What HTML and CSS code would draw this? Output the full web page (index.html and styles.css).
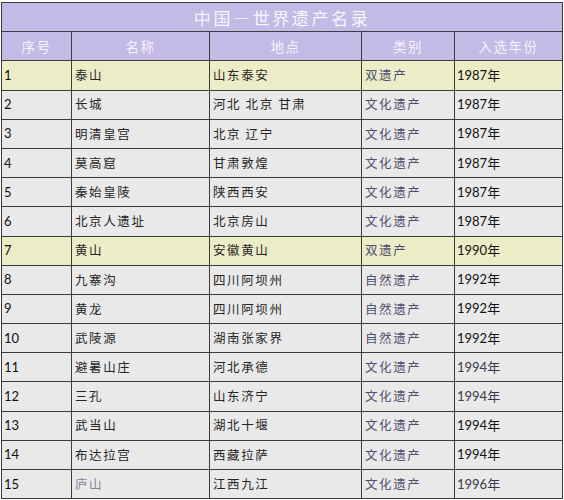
FILE: index.html
```html
<!DOCTYPE html>
<html lang="zh">
<head>
<meta charset="utf-8">
<link rel="stylesheet" href="styles.css">
</head>
<body>
<table class="heritage">
  <colgroup>
    <col class="c-no"><col class="c-name"><col class="c-place"><col class="c-type"><col class="c-year">
  </colgroup>
  <thead>
    <tr class="title-row"><th colspan="5">中国—世界遗产名录</th></tr>
    <tr class="head-row"><th>序号</th><th>名称</th><th>地点</th><th>类别</th><th>入选年份</th></tr>
  </thead>
  <tbody>
    <tr class="dual"><td class="num">1</td><td>泰山</td><td>山东泰安</td><td class="type">双遗产</td><td class="year">1987年</td></tr>
    <tr><td class="num">2</td><td>长城</td><td>河北&nbsp;北京&nbsp;甘肃</td><td class="type">文化遗产</td><td class="year">1987年</td></tr>
    <tr><td class="num">3</td><td>明清皇宫</td><td>北京&nbsp;辽宁</td><td class="type">文化遗产</td><td class="year">1987年</td></tr>
    <tr><td class="num">4</td><td>莫高窟</td><td>甘肃敦煌</td><td class="type">文化遗产</td><td class="year">1987年</td></tr>
    <tr><td class="num">5</td><td>秦始皇陵</td><td>陕西西安</td><td class="type">文化遗产</td><td class="year">1987年</td></tr>
    <tr><td class="num">6</td><td>北京人遗址</td><td>北京房山</td><td class="type">文化遗产</td><td class="year">1987年</td></tr>
    <tr class="dual"><td class="num">7</td><td>黄山</td><td>安徽黄山</td><td class="type">双遗产</td><td class="year">1990年</td></tr>
    <tr><td class="num">8</td><td>九寨沟</td><td>四川阿坝州</td><td class="type">自然遗产</td><td class="year">1992年</td></tr>
    <tr><td class="num">9</td><td>黄龙</td><td>四川阿坝州</td><td class="type">自然遗产</td><td class="year">1992年</td></tr>
    <tr><td class="num">10</td><td>武陵源</td><td>湖南张家界</td><td class="type">自然遗产</td><td class="year">1992年</td></tr>
    <tr><td class="num">11</td><td>避暑山庄</td><td>河北承德</td><td class="type">文化遗产</td><td class="year light">1994年</td></tr>
    <tr><td class="num">12</td><td>三孔</td><td>山东济宁</td><td class="type">文化遗产</td><td class="year light">1994年</td></tr>
    <tr><td class="num">13</td><td>武当山</td><td>湖北十堰</td><td class="type">文化遗产</td><td class="year">1994年</td></tr>
    <tr><td class="num">14</td><td>布达拉宫</td><td>西藏拉萨</td><td class="type">文化遗产</td><td class="year">1994年</td></tr>
    <tr><td class="num">15</td><td class="faded">庐山</td><td>江西九江</td><td class="type">文化遗产</td><td class="year light">1996年</td></tr>
  </tbody>
</table>
</body>
</html>
```
FILE: styles.css
```css
html, body {
  margin: 0;
  padding: 0;
  background: #ffffff;
}
body {
  padding: 2px 0 0 1px;
  font-family: "Noto Sans CJK SC", sans-serif;
}
.heritage {
  border-collapse: collapse;
  width: 561px;
  table-layout: fixed;
}
.c-no { width: 70px; }
.c-name { width: 138px; }
.c-place { width: 152px; }
.c-type { width: 93px; }
.c-year { width: 108px; }
.heritage th, .heritage td {
  border: 1px solid #3c3c3c;
  height: 29.2px;
  padding: 0 0 0 3px;
  box-sizing: border-box;
  white-space: nowrap;
  overflow: hidden;
}
.title-row th {
  background: #c4bae6;
  color: #f7f5fc;
  font-size: 17px;
  font-weight: 400;
  letter-spacing: 2.6px;
  text-align: center;
  padding: 0;
}
.head-row th {
  background: #c4bae6;
  color: #f4f2fb;
  font-size: 13.5px;
  font-weight: 400;
  letter-spacing: 1.5px;
  text-align: center;
  padding: 0;
}
.heritage td {
  background: #e9e9e9;
  color: #262626;
  font-size: 12.5px;
  letter-spacing: 1.6px;
  line-height: 1;
}
.heritage tr.dual td {
  background: #ececc6;
}
.heritage td.num, .heritage td.year {
  font-family: "Lato", "Noto Sans CJK SC", sans-serif;
  font-size: 13px;
  letter-spacing: 0;
  color: #111111;
  padding-left: 2px;
}
.heritage td.type {
  color: #4f4f6e;
}
.heritage td.year.light {
  color: #3a3a4a;
}
.heritage td.faded {
  color: #8b7f9e;
}
```
